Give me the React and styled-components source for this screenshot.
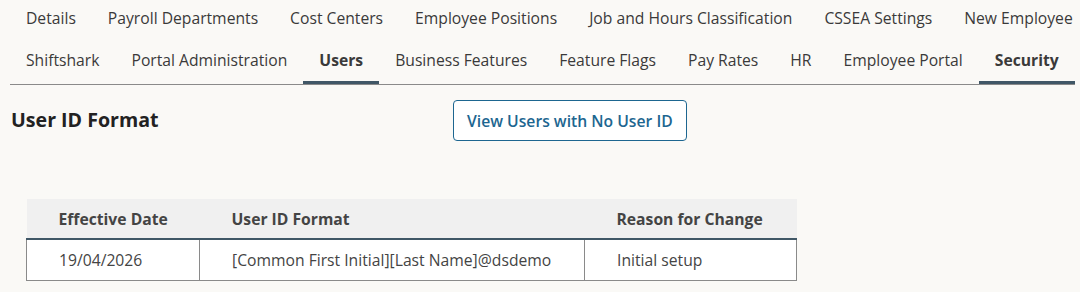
import styled, { createGlobalStyle } from "styled-components";

const GlobalStyle = createGlobalStyle`
  html, body {
    margin: 0;
    padding: 0;
    background: #faf9f6;
    font-family: "Open Sans", "Noto Sans", sans-serif;
    color: #333;
  }
`

const Page = styled.div`
  padding: 0 5px 0 10px;
`

const TabBar = styled.nav`
  border-bottom: 1px solid #8a8a8a;
  overflow: hidden;
`

const TabRow = styled.div`
  display: flex;
  flex-wrap: nowrap;
`

const Tab = styled.a`
  display: block;
  flex: none;
  padding: 6px 16px 9px;
  font-size: 15.68px;
  line-height: 24px;
  color: #3a3a3a;
  font-weight: ${p => (p.$active ? 700 : 400)};
  border-bottom: 3px solid ${p => (p.$active ? "#405766" : "transparent")};
  white-space: nowrap;
  cursor: pointer;
`

const Header = styled.div`
  display: flex;
  align-items: flex-start;
  padding-top: 15px;
`

const Title = styled.h2`
  flex: 0 0 442px;
  margin: 0;
  padding: 6px 0 0 1px;
  font-size: 19.6px;
  line-height: 28px;
  font-weight: 700;
  color: #222;
`

const OutlineButton = styled.button`
  height: 41px;
  padding: 0 13px;
  border: 1px solid #1d6690;
  border-radius: 4px;
  background: #fff;
  color: #1d6690;
  font-family: inherit;
  font-size: 15.7px;
  font-weight: 600;
  cursor: pointer;
`

const Table = styled.table`
  margin: 58px 0 0 16px;
  border-collapse: collapse;
  width: 770px;
  table-layout: fixed;
`

const HeadCell = styled.th`
  width: ${p => p.$w}px;
  height: 40px;
  padding: 0 0 0 32px;
  box-sizing: border-box;
  text-align: left;
  font-size: 15.7px;
  font-weight: 700;
  color: #444;
  background: #f0f0f0;
  border-bottom: 2px solid #405766;
`

const Cell = styled.td`
  height: 40px;
  padding: 0 0 0 32px;
  font-size: 15.7px;
  color: #444;
  background: #fff;
  border: 1px solid #8a8a8a;
  border-top: none;
`

const tabsTop = [
  "Details",
  "Payroll Departments",
  "Cost Centers",
  "Employee Positions",
  "Job and Hours Classification",
  "CSSEA Settings",
  "New Employee",
]

const tabsBottom = [
  "Shiftshark",
  "Portal Administration",
  "Users",
  "Business Features",
  "Feature Flags",
  "Pay Rates",
  "HR",
  "Employee Portal",
  "Security",
]

const active = ["Users", "Security"]

const App = () => {
  return (
    <Page>
      <GlobalStyle />
      <TabBar>
        <TabRow>
          {tabsTop.map(t => (
            <Tab key={t}>{t}</Tab>
          ))}
        </TabRow>
        <TabRow>
          {tabsBottom.map(t => (
            <Tab key={t} $active={active.includes(t)}>{t}</Tab>
          ))}
        </TabRow>
      </TabBar>

      <Header>
        <Title>User ID Format</Title>
        <OutlineButton>View Users with No User ID</OutlineButton>
      </Header>

      <Table>
        <thead>
          <tr>
            <HeadCell $w={173}>Effective Date</HeadCell>
            <HeadCell $w={385}>User ID Format</HeadCell>
            <HeadCell $w={212}>Reason for Change</HeadCell>
          </tr>
        </thead>
        <tbody>
          <tr>
            <Cell>19/04/2026</Cell>
            <Cell>[Common First Initial][Last Name]@dsdemo</Cell>
            <Cell>Initial setup</Cell>
          </tr>
        </tbody>
      </Table>
    </Page>
  );
};

export default App;
